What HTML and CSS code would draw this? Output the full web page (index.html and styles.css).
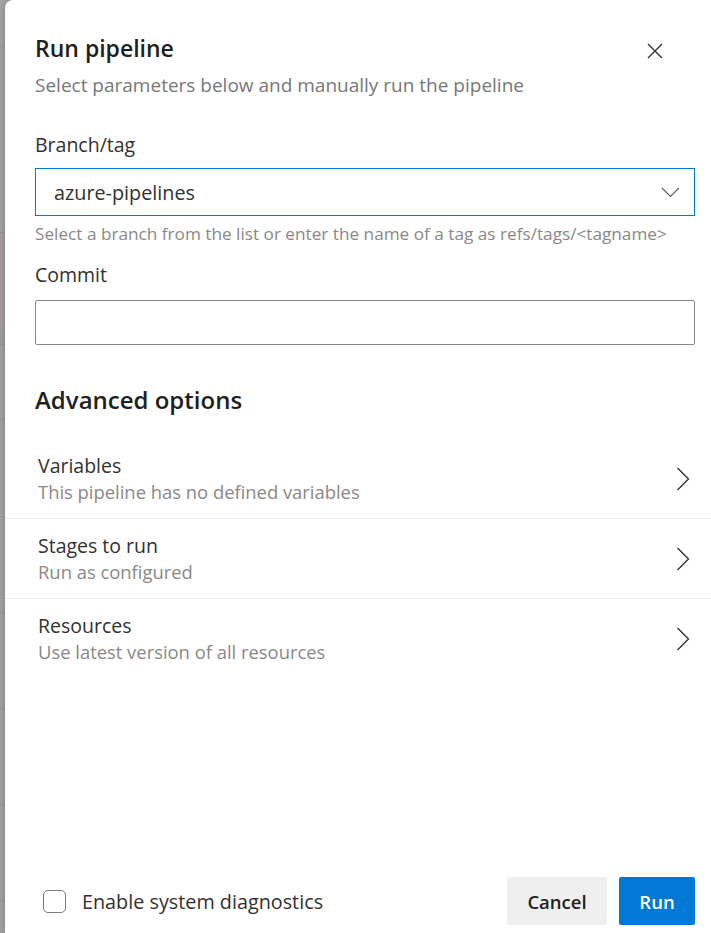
FILE: index.html
```html
<!DOCTYPE html>
<html lang="en">
<head>
  <meta charset="UTF-8">
  <meta name="viewport" content="width=device-width, initial-scale=1.0">
  <title>Run pipeline</title>
  <link rel="stylesheet" href="styles.css">
</head>
<body>
  <div class="page">
    <div class="backdrop">
      <div class="bd-row" style="height: 47px"></div>
      <div class="bd-row" style="height: 186px"></div>
      <div class="bd-row bd-pink" style="height: 97px"></div>
      <div class="bd-row bd-dark" style="height: 15px"></div>
      <div class="bd-row" style="height: 75px"></div>
      <div class="bd-row" style="height: 97px"></div>
      <div class="bd-row" style="height: 96px"></div>
      <div class="bd-row" style="height: 96px"></div>
      <div class="bd-row" style="height: 96px"></div>
      <div class="bd-row" style="height: 96px"></div>
      <div class="bd-row" style="height: 32px"></div>
    </div>

    <div class="panel">
      <div class="panel-body">
        <div class="panel-header">
          <div class="titles">
            <h1 class="title">Run pipeline</h1>
            <div class="subtitle">Select parameters below and manually run the pipeline</div>
          </div>
          <button class="close-btn" aria-label="Close">
            <svg width="16" height="16" viewBox="0 0 16 16">
              <path d="M1 1 L15 15 M15 1 L1 15" stroke="#323130" stroke-width="1.4" fill="none"/>
            </svg>
          </button>
        </div>

        <div class="field">
          <label class="label">Branch/tag</label>
          <div class="dropdown">
            <span class="dropdown-text">azure-pipelines</span>
            <svg class="dropdown-chevron" width="19" height="11" viewBox="0 0 19 11">
              <path d="M1 1 L9.5 9.5 L18 1" stroke="#605e5c" stroke-width="1.1" fill="none"/>
            </svg>
          </div>
          <div class="helper">Select a branch from the list or enter the name of a tag as refs/tags/&lt;tagname&gt;</div>
        </div>

        <div class="field field-commit">
          <label class="label">Commit</label>
          <input class="text-input" type="text">
        </div>

        <h2 class="section-title">Advanced options</h2>

        <ul class="option-list">
          <li class="option">
            <div class="option-text">
              <div class="option-name">Variables</div>
              <div class="option-desc">This pipeline has no defined variables</div>
            </div>
            <svg class="option-chevron" width="14" height="24" viewBox="0 0 14 24">
              <path d="M1.5 1 L12.5 12 L1.5 23" stroke="#323130" stroke-width="1.4" fill="none"/>
            </svg>
          </li>
          <li class="option">
            <div class="option-text">
              <div class="option-name">Stages to run</div>
              <div class="option-desc">Run as configured</div>
            </div>
            <svg class="option-chevron" width="14" height="24" viewBox="0 0 14 24">
              <path d="M1.5 1 L12.5 12 L1.5 23" stroke="#323130" stroke-width="1.4" fill="none"/>
            </svg>
          </li>
          <li class="option">
            <div class="option-text">
              <div class="option-name">Resources</div>
              <div class="option-desc">Use latest version of all resources</div>
            </div>
            <svg class="option-chevron" width="14" height="24" viewBox="0 0 14 24">
              <path d="M1.5 1 L12.5 12 L1.5 23" stroke="#323130" stroke-width="1.4" fill="none"/>
            </svg>
          </li>
        </ul>
      </div>

      <div class="panel-footer">
        <label class="checkbox">
          <span class="checkbox-box"></span>
          <span class="checkbox-label">Enable system diagnostics</span>
        </label>
        <div class="actions">
          <button class="btn btn-default">Cancel</button>
          <button class="btn btn-primary">Run</button>
        </div>
      </div>
    </div>
  </div>
</body>
</html>
```

FILE: styles.css
```css
html, body {
  margin: 0;
  padding: 0;
  height: 100%;
}

body {
  font-family: "Open Sans", "Noto Sans", Arial, sans-serif;
  color: #323130;
  background-color: #a6a6a6;
  overflow: hidden;
}

.page {
  display: flex;
  height: 933px;
}

/* dimmed page behind the panel */
.backdrop {
  width: 5px;
  flex-shrink: 0;
  display: flex;
  flex-direction: column;
}

.bd-row {
  flex-shrink: 0;
  border-bottom: 1px solid #9a9a9a;
  box-sizing: border-box;
}

.bd-pink {
  background: #aaa1a1;
}

.bd-dark {
  background: #a0a3a3;
}

.panel {
  flex: 1;
  background: #fff;
  border-top-left-radius: 8px;
  box-shadow: -2px 0 6px rgba(0, 0, 0, 0.18);
  display: flex;
  flex-direction: column;
}

.panel-body {
  flex: 1;
  padding: 0 16px 0 30px;
}

.panel-header {
  display: flex;
  justify-content: space-between;
  align-items: flex-start;
}

.titles {
  padding-top: 32px;
}

.title {
  margin: 0;
  font-size: 23px;
  font-weight: 600;
  line-height: 32px;
  color: #201f1e;
}

.subtitle {
  margin-top: 8px;
  font-size: 19px;
  line-height: 26px;
  color: #777;
}

.close-btn {
  margin: 35px 24px 0 0;
  width: 32px;
  height: 32px;
  padding: 0;
  border: none;
  background: none;
  display: flex;
  align-items: center;
  justify-content: center;
}

.field {
  margin-top: 35px;
}

.label {
  display: block;
  font-size: 19.5px;
  line-height: 24px;
  color: #323130;
}

.dropdown {
  margin-top: 11px;
  height: 48px;
  box-sizing: border-box;
  border: 1px solid #0078d4;
  display: flex;
  align-items: center;
  justify-content: space-between;
  padding: 0 14px 0 18px;
}

.dropdown-text {
  font-size: 19.8px;
  color: #323130;
}

.helper {
  margin-top: 7px;
  font-size: 17.2px;
  line-height: 22px;
  color: #8a8886;
}

.field-commit {
  margin-top: 18px;
}

.text-input {
  display: block;
  margin-top: 13px;
  width: 100%;
  height: 45px;
  box-sizing: border-box;
  border: 1px solid #8a8886;
  border-radius: 2px;
  font-family: inherit;
  font-size: 19.5px;
  padding: 0 18px;
}

.section-title {
  margin: 39px 0 0;
  font-size: 24px;
  font-weight: 600;
  line-height: 32px;
  color: #201f1e;
}

.option-list {
  list-style: none;
  margin: 23px -16px 0 -30px;
  padding: 0;
}

.option {
  height: 80px;
  box-sizing: border-box;
  display: flex;
  align-items: center;
  justify-content: space-between;
  padding: 0 21px 0 33px;
  border-bottom: 1px solid #eaeaea;
}

.option:last-child {
  border-bottom: none;
}

.option-name {
  font-size: 19.5px;
  line-height: 26px;
  color: #323130;
}

.option-desc {
  font-size: 18.4px;
  line-height: 26px;
  color: #8a8886;
}

.panel-footer {
  display: flex;
  align-items: center;
  justify-content: space-between;
  padding: 0 16px 8px 38px;
}

.checkbox {
  display: flex;
  align-items: center;
  gap: 16px;
}

.checkbox-box {
  width: 23px;
  height: 23px;
  box-sizing: border-box;
  border: 1px solid #7a7a7a;
  border-radius: 5px;
}

.checkbox-label {
  font-size: 19.8px;
  color: #323130;
}

.actions {
  display: flex;
  gap: 12px;
}

.btn {
  height: 48px;
  border: none;
  border-radius: 2px;
  font-family: inherit;
  font-size: 18.5px;
  font-weight: 600;
  padding: 0;
}

.btn-default {
  width: 100px;
  background: #efefef;
  color: #201f1e;
}

.btn-primary {
  width: 76px;
  background: #0078d4;
  color: #fff;
}
```
